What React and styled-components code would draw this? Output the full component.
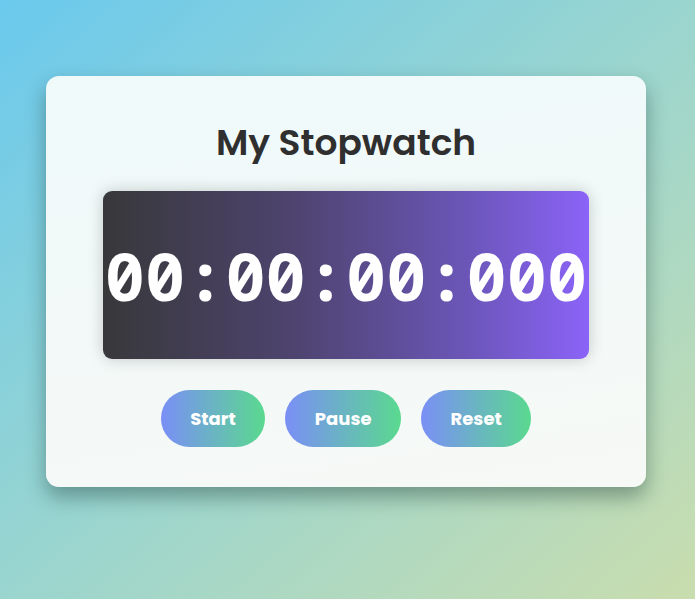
import React from "react";
import styled, { createGlobalStyle } from "styled-components";

const GlobalStyle = createGlobalStyle`
  html, body {
    margin: 0;
    padding: 0;
  }
  body {
    min-height: 599px;
    background: linear-gradient(to bottom right, #6ac9ed 0%, #9ad5cf 50%, #c9ddae 100%);
    font-family: "Poppins", "Inter", "Noto Sans", sans-serif;
  }
`;

const Page = styled.main`
  display: flex;
  justify-content: center;
  align-items: flex-start;
  padding-top: 76px;
  min-height: 599px;
  box-sizing: border-box;
`;

const Card = styled.section`
  width: 600px;
  box-sizing: border-box;
  padding: 43px 0 40px;
  display: flex;
  flex-direction: column;
  align-items: center;
  background: linear-gradient(to bottom, rgba(243, 251, 251, 0.97), rgba(248, 250, 248, 0.97));
  border-radius: 13px;
  box-shadow: 0 10px 20px rgba(20, 50, 45, 0.4);
  margin-left: -3px;
`;

const Title = styled.h1`
  margin: 0 0 24px;
  font-size: 36px;
  line-height: 48px;
  font-weight: 600;
  color: #2f2f2f;
`;

const Display = styled.div`
  width: 486px;
  height: 168px;
  display: flex;
  align-items: center;
  justify-content: center;
  border-radius: 9px;
  background: linear-gradient(to right, #38383a 0%, #4e4470 40%, #6b56b8 75%, #8b63f8 100%);
  box-shadow: 0 0 16px rgba(0, 0, 0, 0.2);
`;

const Time = styled.span`
  font-family: "Noto Sans Mono", "DejaVu Sans Mono", monospace;
  font-weight: bold;
  font-size: 67px;
  color: #ffffff;
  white-space: nowrap;
`;

const Controls = styled.div`
  margin-top: 31px;
  display: flex;
  gap: 20px;
`;

const Button = styled.button`
  height: 57px;
  padding: 0 ${(p) => p.$pad}px;
  border: none;
  border-radius: 29px;
  background: linear-gradient(to right, #7a8ff6, #5ad98f);
  color: #ffffff;
  font-family: "Poppins", "Inter", "Noto Sans", sans-serif;
  font-weight: 700;
  font-size: 18px;
  cursor: pointer;
`;

export default function App() {
  return (
    <>
      <GlobalStyle />
      <Page>
        <Card>
          <Title>My Stopwatch</Title>
          <Display>
            <Time>00:00:00:000</Time>
          </Display>
          <Controls>
            <Button $pad={29.5}>Start</Button>
            <Button $pad={29.5}>Pause</Button>
            <Button $pad={29.5}>Reset</Button>
          </Controls>
        </Card>
      </Page>
    </>
  );
}
